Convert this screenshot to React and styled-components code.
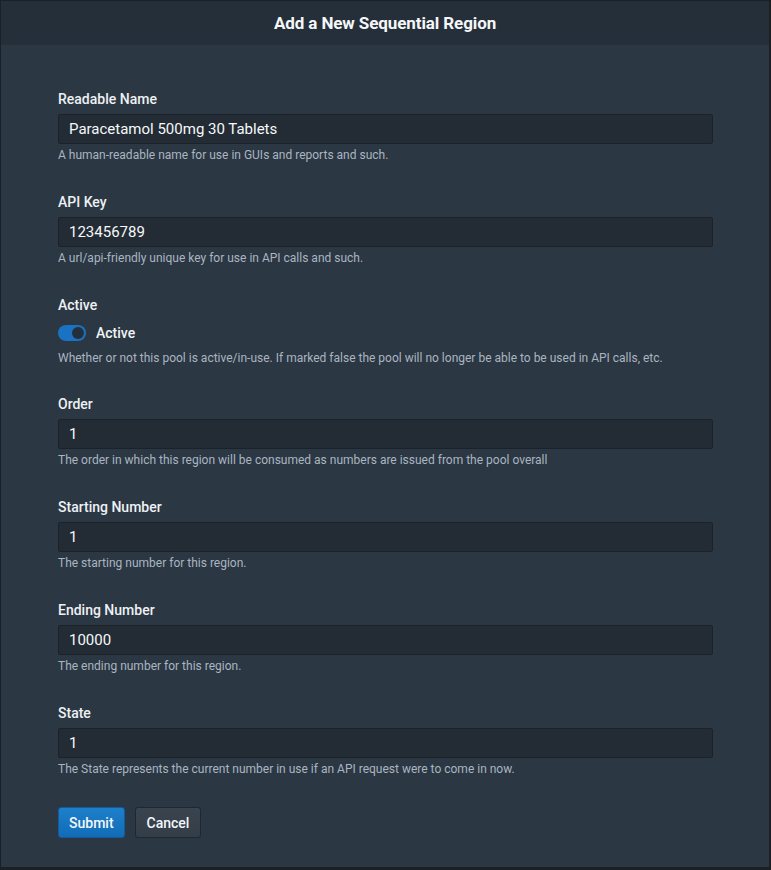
import React from 'react';
import styled, { createGlobalStyle } from 'styled-components';

const GlobalStyle = createGlobalStyle`
  html, body {
    margin: 0;
    padding: 0;
    background: #1b2025;
  }
  body {
    font-family: Roboto, "Noto Sans", "Liberation Sans", sans-serif;
    -webkit-font-smoothing: antialiased;
  }
`;

const Modal = styled.div`
  width: 768px;
  height: 866px;
  border: 1px solid #1a2026;
  background: #2b3743;
  display: flex;
  flex-direction: column;
  overflow: hidden;
`;

const Header = styled.div`
  height: 44px;
  flex-shrink: 0;
  background: #252f39;
  display: flex;
  align-items: center;
  justify-content: center;
  color: #f4f6f8;
  font-size: 17px;
  font-weight: 700;
  letter-spacing: -0.1px;
`;

const Body = styled.form`
  padding: 45px 56px 0 57px;
  display: flex;
  flex-direction: column;
`;

const Field = styled.div`
  display: flex;
  flex-direction: column;
  margin-bottom: ${p => (p.$toggle ? '29px' : '30px')};
`;

const Label = styled.label`
  font-size: 14px;
  line-height: 18px;
  font-weight: 500;
  color: #eef1f4;
  margin-bottom: ${p => (p.$toggle ? '9px' : '6px')};
`;

const Input = styled.input`
  box-sizing: border-box;
  height: 30px;
  width: 100%;
  padding: 0 10px;
  background: #232c35;
  border: 1px solid #1b2229;
  border-radius: 2px;
  color: #f6f8fa;
  font-family: inherit;
  font-size: 15px;
  outline: none;
`;

const Help = styled.div`
  font-size: 12px;
  line-height: 16px;
  color: #aab5c0;
  margin-top: ${p => (p.$toggle ? '7px' : '3px')};
`;

const ToggleRow = styled.div`
  height: 20px;
  display: flex;
  align-items: center;
  gap: 10px;
  color: #f2f4f6;
  font-size: 14px;
  font-weight: 500;
`;

const Switch = styled.span`
  position: relative;
  width: 28px;
  height: 16px;
  border-radius: 8px;
  background: #1a72c2;
  flex-shrink: 0;
  &::after {
    content: '';
    position: absolute;
    top: 2px;
    right: 2px;
    width: 12px;
    height: 12px;
    border-radius: 50%;
    background: #252f39;
  }
`;

const Actions = styled.div`
  display: flex;
  gap: 10px;
`;

const Button = styled.button`
  height: 31px;
  padding: 0 ${p => (p.$primary ? '10px' : '11px')};
  border-radius: 3px;
  font-family: inherit;
  font-size: 14px;
  font-weight: 500;
  color: #f4f6f8;
  border: 1px solid ${p => (p.$primary ? '#115a9c' : '#1f272f')};
  background: ${p =>
    p.$primary ? 'linear-gradient(#1e7fcb, #116cb6)' : 'linear-gradient(#39444f, #333e49)'};
`;

const fields = [
  { label: 'Readable Name', value: 'Paracetamol 500mg 30 Tablets', help: 'A human-readable name for use in GUIs and reports and such.' },
  { label: 'API Key', value: '123456789', help: 'A url/api-friendly unique key for use in API calls and such.' },
  { label: 'Active', toggle: true, help: 'Whether or not this pool is active/in-use. If marked false the pool will no longer be able to be used in API calls, etc.' },
  { label: 'Order', value: '1', help: 'The order in which this region will be consumed as numbers are issued from the pool overall' },
  { label: 'Starting Number', value: '1', help: 'The starting number for this region.' },
  { label: 'Ending Number', value: '10000', help: 'The ending number for this region.' },
  { label: 'State', value: '1', help: 'The State represents the current number in use if an API request were to come in now.' },
];

export default function App() {
  return (
    <>
      <GlobalStyle />
      <Modal>
        <Header>Add a New Sequential Region</Header>
        <Body onSubmit={e => e.preventDefault()}>
          {fields.map(f => (
            <Field key={f.label} $toggle={f.toggle}>
              <Label $toggle={f.toggle}>{f.label}</Label>
              {f.toggle ? (
                <ToggleRow>
                  <Switch />
                  Active
                </ToggleRow>
              ) : (
                <Input defaultValue={f.value} />
              )}
              <Help $toggle={f.toggle}>{f.help}</Help>
            </Field>
          ))}
          <Actions>
            <Button $primary type="submit">Submit</Button>
            <Button type="button">Cancel</Button>
          </Actions>
        </Body>
      </Modal>
    </>
  );
}
